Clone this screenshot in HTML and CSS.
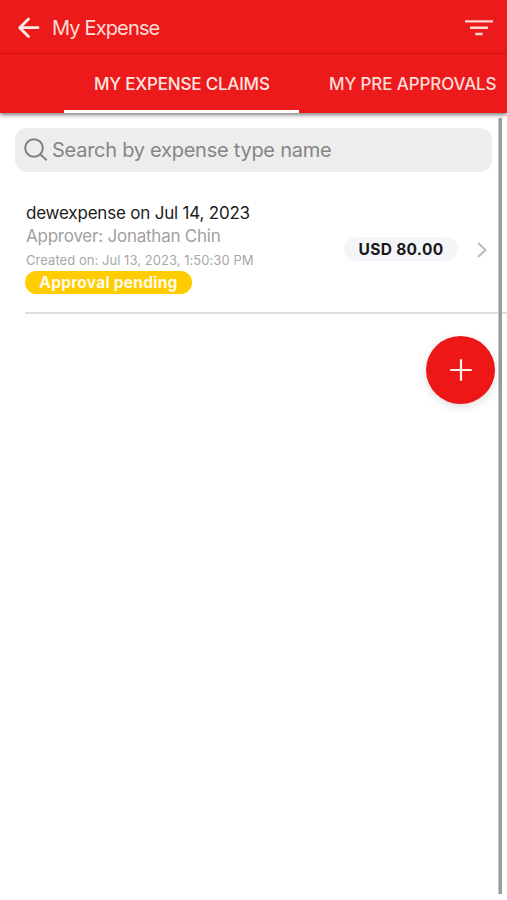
FILE: index.html
```html
<!DOCTYPE html>
<html lang="en">
<head>
<meta charset="utf-8">
<title>My Expense</title>
<link rel="stylesheet" href="styles.css">
</head>
<body>
<div class="app">
  <header class="bar">
    <svg class="back" width="24" height="24" viewBox="0 0 24 24"><path d="M21 11.7H3M11.5 3L2.7 11.7l8.8 8.8"/></svg>
    <h1 class="title"><span>My Expense</span></h1>
    <svg class="filter" width="30" height="20" viewBox="0 0 30 20"><path d="M1 3.4h28M6 9.7h18M11.3 16h7.4"/></svg>
  </header>
  <nav class="tabs">
    <a class="tab active"><span>MY EXPENSE CLAIMS</span></a>
    <a class="tab"><span>MY PRE APPROVALS</span></a>
  </nav>
  <main class="content">
    <div class="search">
      <svg class="glass" width="24" height="24" viewBox="0 0 24 24"><circle cx="10" cy="10" r="8.8"/><path d="M16.2 16.2L22.7 22.3"/></svg>
      <span>Search by expense type name</span>
    </div>
    <article class="claim">
      <div class="details">
        <div class="name"><span>dewexpense on Jul 14, 2023</span></div>
        <div class="approver"><span>Approver: Jonathan Chin</span></div>
        <div class="created"><span>Created on: Jul 13, 2023, 1:50:30 PM</span></div>
        <div class="status"><span>Approval pending</span></div>
      </div>
      <div class="amount"><span>USD 80.00</span></div>
      <svg class="chevron" width="12" height="18" viewBox="0 0 12 18"><path d="M2 2l7.4 7L2 16"/></svg>
    </article>
  </main>
  <div class="scrollbar"></div>
  <button class="add" aria-label="Add"><svg width="24" height="24" viewBox="0 0 24 24"><path d="M12 1.2v21.6M1.2 12h21.6"/></svg></button>
</div>
</body>
</html>
```
FILE: styles.css
```css
* { box-sizing: border-box; }
body { margin: 0; background: #fff; font-family: Inter, "Liberation Sans", sans-serif; }
svg { display: block; flex: none; fill: none; stroke-linecap: butt; }
.app { position: relative; width: 507px; height: 900px; overflow: hidden; }
.bar { display: flex; align-items: center; height: 54px; padding: 2px 13px 0 17px; background: #ed1a1b; border-bottom: 1px solid #d91414; }
.back { stroke: #ffe9e5; stroke-width: 2.8; stroke-linecap: round; stroke-linejoin: round; }
.title { flex: 1; margin: 1px 0 0 11px; color: #ffdcd8; font-size: 20px; font-weight: 400; line-height: 24px; letter-spacing: -0.85px; }
.filter { stroke: #ffd5d0; stroke-width: 2.4; }
.tabs { display: flex; height: 59px; padding-left: 64px; background: #ed1a1b; box-shadow: 0 2px 4px rgba(0, 0, 0, .5); }
.tab { flex: none; width: 235px; padding-left: 30px; color: #ffdcd8; font-size: 17px; font-weight: 500; line-height: 61px; letter-spacing: -0.2px; white-space: nowrap; }
.tab + .tab { letter-spacing: -0.12px; }
.active { color: #ffe6e3; border-bottom: 3px solid #fff; }
.content { padding-top: 15px; }
.search { display: flex; align-items: center; width: 477px; height: 44px; margin-left: 15px; padding-left: 9px; gap: 4px; border-radius: 12px; background: #ededed; color: #858585; font-size: 20px; line-height: 26px; letter-spacing: -0.26px; }
.glass { stroke: #808080; stroke-width: 2; }
.claim { display: flex; align-items: center; height: 142px; margin-left: 25px; border-bottom: 2px solid #dedede; }
.details { width: 319px; padding-top: 11px; white-space: nowrap; }
.name { padding-left: 1px; color: #1c1c1c; font-size: 17px; line-height: 24px; letter-spacing: -0.2px; }
.approver { padding-left: 1px; color: #a0a0a0; font-size: 17px; line-height: 23px; letter-spacing: -0.23px; }
.created { padding-left: 1px; color: #a8a8a8; font-size: 13px; line-height: 24px; letter-spacing: 0.05px; }
.status { width: 167px; height: 23px; margin-top: -1px; border-radius: 12px; background: #fc0; color: #fffbe9; font-size: 15.5px; font-weight: 700; line-height: 23px; letter-spacing: 0.25px; text-align: center; }
.amount { width: 114px; height: 24px; margin-top: 13px; border-radius: 12px; background: #f4f5f8; color: #191919; font-size: 15.5px; font-weight: 700; line-height: 25px; letter-spacing: 0.3px; text-align: center; }
.chevron { margin: 15px 0 0 18px; stroke: #bcbcbc; stroke-width: 2.2; }
.scrollbar { position: absolute; left: 498px; top: 118px; width: 4px; height: 776px; background: #9b9b9b; border-left: 1px solid #c6c6c6; }
.add { position: absolute; left: 426px; top: 336px; display: grid; place-items: center; width: 69px; height: 68px; padding: 0; border: 0; border-radius: 50%; background: #ed1718; box-shadow: 0 3px 10px rgba(0, 0, 0, .13); }
.add svg { stroke: #fff0ed; stroke-width: 2.2; }
```
